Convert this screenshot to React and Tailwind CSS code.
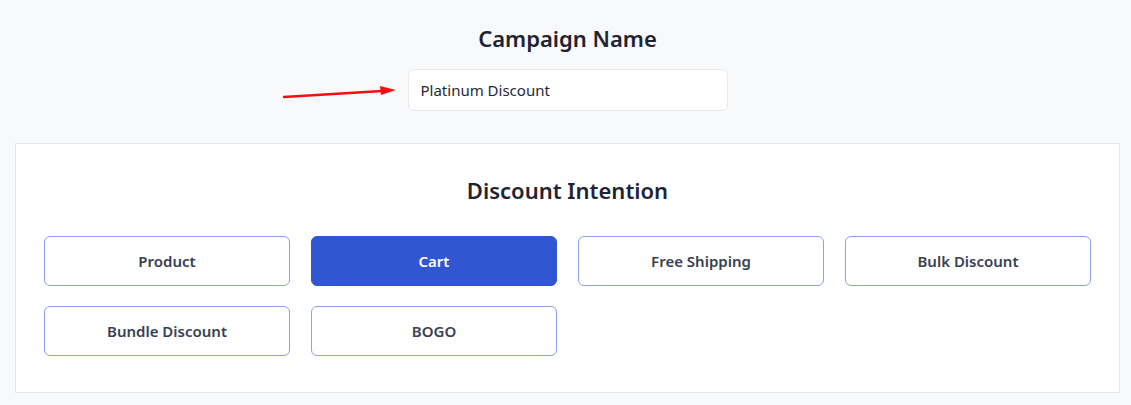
const options = ["Product", "Cart", "Free Shipping", "Bulk Discount", "Bundle Discount", "BOGO"];

export default function App() {
  const selected = "Cart";

  return (
    <div className="min-h-[405px] w-full bg-[#f8f9fb] pt-[22px] pl-[15px] pr-[11px] pb-[12px] font-['Noto_Sans',sans-serif] text-[#1f2937]">
      <div className="flex flex-col items-center">
        <h2 className="text-[22px] font-semibold leading-[32px] text-[#1f2433]">Campaign Name</h2>
        <div className="relative mt-[15px]">
          <svg
            className="absolute left-[-126px] top-[14px]"
            width="116"
            height="16"
            viewBox="0 0 116 16"
          >
            <line x1="2" y1="14" x2="100" y2="8" stroke="#f01010" strokeWidth="2.5" strokeLinecap="round" />
            <polygon points="114,7 98,3 99,12" fill="#f01010" />
          </svg>
          <input
            className="w-[320px] h-[42px] rounded-md border border-[#e5e7eb] bg-white px-[12px] text-[15px] text-[#1f2937] outline-none"
            defaultValue="Platinum Discount"
          />
        </div>
      </div>

      <section className="mt-[32px] border border-[#e3e6ea] bg-white px-[28px] pt-[30px] pb-[36px]">
        <h3 className="text-center text-[22px] font-semibold leading-[32px] text-[#1f2433]">Discount Intention</h3>
        <div className="mt-[30px] grid grid-cols-4 gap-x-[21px] gap-y-[20px]">
          {options.map((o) => (
            <button
              key={o}
              className={
                o === selected
                  ? "h-[50px] rounded-md border border-[#3056d3] bg-[#3056d3] text-[15px] font-semibold text-white"
                  : "h-[50px] rounded-md border border-[#8aa2ea] bg-white text-[15px] font-semibold text-[#374151]"
              }
            >
              {o}
            </button>
          ))}
        </div>
      </section>
    </div>
  );
}
